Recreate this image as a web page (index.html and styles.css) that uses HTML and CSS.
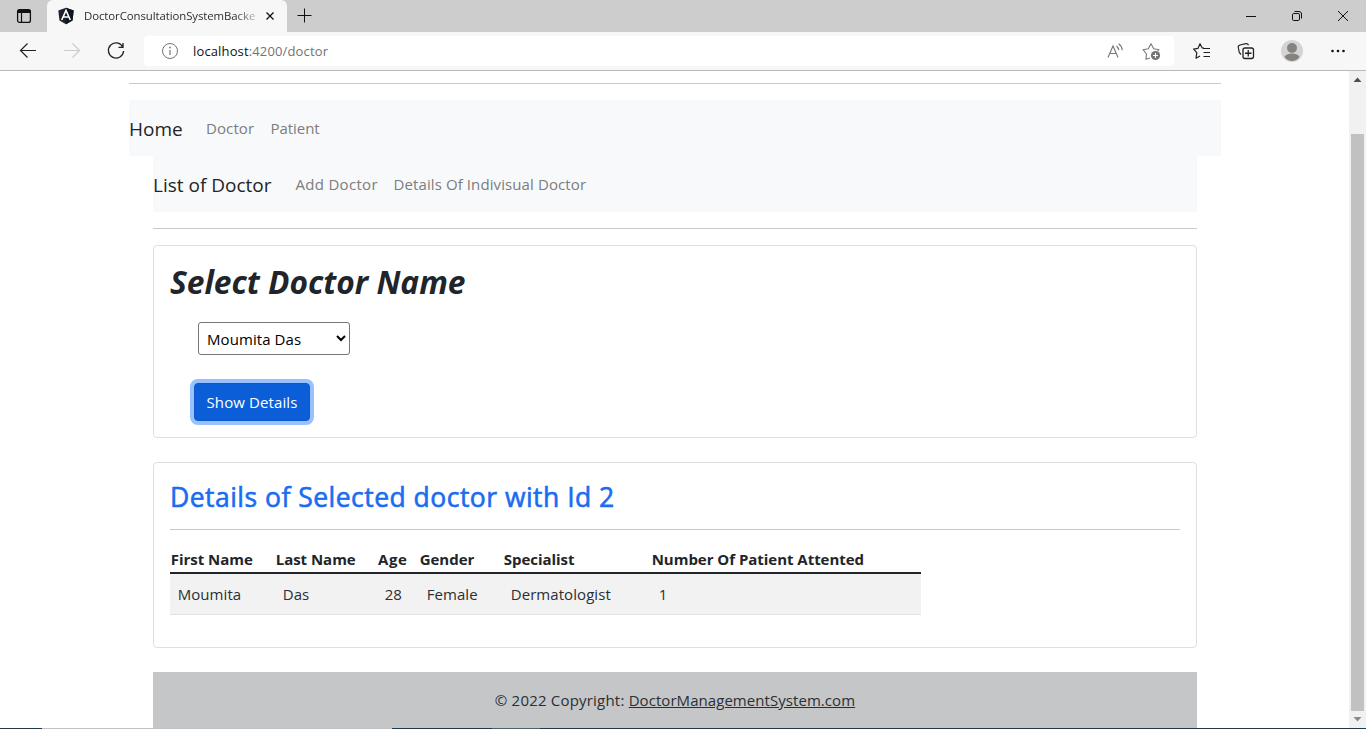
FILE: index.html
```html
<!DOCTYPE html>
<html lang="en">
<head>
<meta charset="utf-8">
<title>DoctorConsultationSystemBackend</title>
<link rel="stylesheet" href="styles.css">
</head>
<body>
<div class="window">
  <header class="tabbar">
    <div class="tab-actions">
      <svg width="16" height="16" viewBox="0 0 16 16"><rect x="1.6" y="1.6" width="12.8" height="12.8" rx="2" fill="none" stroke="#111" stroke-width="1.3"/><path d="M1.5 2.8Q1.5 1.5 3 1.5h10q1.500 0 1.500 1.300V5h-13z" fill="#111"/><path d="M5.500 5v9" stroke="#111" stroke-width="1.200"/></svg>
    </div>
    <div class="tab">
      <svg class="favicon" width="18" height="18" viewBox="0 0 18 18"><path d="M9 .8 16.700 3.500 15.500 13.500 9 17.200 2.500 13.500 1.300 3.500z" fill="#1b222b"/><path d="M9 .8 16.700 3.500 15.500 13.500 9 17.200z" fill="#0d1520"/><path d="M4.700 13 9 3.500 13.300 13M6.300 10h5.400" fill="none" stroke="#fff" stroke-width="1.600"/></svg>
      <span class="tab-title">DoctorConsultationSystemBacke</span>
      <svg class="tab-close" width="10" height="10" viewBox="0 0 10 10"><path d="M1.500 1.500l7 7M8.500 1.500 1.500 8.500" stroke="#111" stroke-width="1.300"/></svg>
    </div>
    <div class="new-tab"><svg width="16" height="16" viewBox="0 0 16 16"><path d="M7.500 .5v14M.5 7.500h14" stroke="#111"/></svg></div>
    <div class="window-controls">
      <svg width="12" height="12" viewBox="0 0 12 12"><path d="M1 6.500h10" stroke="#111"/></svg>
      <svg width="12" height="12" viewBox="0 0 12 12"><rect x="1.500" y="3.500" width="7" height="7" rx="1.300" fill="none" stroke="#111"/><path d="M3.500 1.500H8q2.500 0 2.500 2.500v4.500" fill="none" stroke="#111"/></svg>
      <svg width="12" height="12" viewBox="0 0 12 12"><path d="M1 1l10 10M11 1 1 11" stroke="#111"/></svg>
    </div>
  </header>
  <div class="toolbar">
    <div class="nav-buttons">
      <svg width="20" height="20" viewBox="0 0 20 20"><path d="M18 9.500H2.500M9.500 2.500 2.500 9.500l7 7" fill="none" stroke="#222" stroke-width="1.200"/></svg>
      <svg width="20" height="20" viewBox="0 0 20 20"><path d="M2 9.500h15.500M10.500 2.500l7 7-7 7" fill="none" stroke="#ccc" stroke-width="1.200"/></svg>
      <svg width="20" height="20" viewBox="0 0 20 20"><path d="M16.800 6A7.600 7.600 0 1 0 17.600 10M17 2v4.300h-4.500" fill="none" stroke="#222" stroke-width="1.300"/></svg>
    </div>
    <div class="address">
      <svg width="18" height="18" viewBox="0 0 18 18"><circle cx="9" cy="9" r="7.500" fill="none" stroke="#747474"/><path d="M9 8v5" stroke="#747474" stroke-width="1.200"/><circle cx="9" cy="5.500" r=".9" fill="#747474"/></svg>
      <span class="url"><span class="host">localhost</span>:4200/doctor</span>
      <svg class="read-aloud" width="18" height="18" viewBox="0 0 18 18"><path d="M2 15.500 7 4l5 11.500M3.800 11.500h6.400" fill="none" stroke="#777" stroke-width="1.100"/><path d="M10.500 4q2 1.700 2.200 4M12.700 1.800q3.300 2.400 3.500 6.400" fill="none" stroke="#777" stroke-width="1.100"/></svg>
      <svg width="20" height="20" viewBox="0 0 20 20"><path d="M9 17 4.900 18.300 5.500 13 2 8.700 7.300 7.700 10 2.700 12.700 7.700 18 8.700 16.500 10.300" fill="none" stroke="#777" stroke-width="1.100" stroke-linejoin="round"/><circle cx="14.500" cy="14.500" r="4.600" fill="#747474"/><path d="M14.500 12v5M12 14.500h5" stroke="#fff" stroke-width="1.100"/></svg>
    </div>
    <div class="tools">
      <svg width="20" height="20" viewBox="0 0 20 20"><path d="M12 7.200 10.200 7 8 2.700 5.900 7.400l-4.300.7 3.200 3.500L4 17.200l4-2.200" fill="none" stroke="#222" stroke-width="1.200" stroke-linejoin="round"/><path d="M11 7.500h7M11.500 11.500H18M11.500 15.500H18" stroke="#222" stroke-width="1.200"/></svg>
      <svg width="20" height="20" viewBox="0 0 20 20"><path d="M5 13.500 3.300 11.500 2.300 6.500Q2 4.500 4 4L10 2.600q1.700-.4 2.500 1.600" fill="none" stroke="#222" stroke-width="1.200"/><rect x="7" y="7" width="10.500" height="10.500" rx="2" fill="none" stroke="#222" stroke-width="1.300"/><path d="M12.250 9v6.500M9 12.250h6.500" stroke="#222" stroke-width="1.300"/></svg>
      <svg width="22" height="22" viewBox="0 0 22 22"><circle cx="11" cy="11" r="11" fill="#d6d4d2"/><circle cx="11" cy="8" r="5" fill="#85827f"/><path d="M3.500 17q1.700-3.500 7.500-3.500t7.500 3.500Q15.500 21 11 21t-7.500-4z" fill="#85827f"/></svg>
      <svg width="16" height="16" viewBox="0 0 16 16"><g fill="#111"><circle cx="2.500" cy="8" r="1.300"/><circle cx="8" cy="8" r="1.300"/><circle cx="13.500" cy="8" r="1.300"/></g></svg>
    </div>
  </div>
  <div class="viewport">
    <main class="page">
      <hr class="rule">
      <nav class="navbar">
        <a class="brand brand-home">Home</a><a class="link link-doctor">Doctor</a><a class="link link-patient">Patient</a>
      </nav>
      <div class="content">
        <nav class="navbar">
          <a class="brand brand-list">List of Doctor</a><a class="link link-add">Add Doctor</a><a class="link link-details">Details Of Indivisual Doctor</a>
        </nav>
        <hr class="rule">
        <section class="card select-card">
          <h2 class="select-title">Select Doctor Name</h2>
          <select class="doctor-select"><option>Moumita Das</option></select>
          <button class="show-button">Show Details</button>
        </section>
        <section class="card details-card">
          <h3 class="details-title">Details of Selected doctor with Id 2</h3>
          <hr class="rule details-rule">
          <table class="table">
            <colgroup><col class="c1"><col class="c2"><col class="c3"><col class="c4"><col class="c5"><col class="c6"></colgroup>
            <thead><tr><th>First Name</th><th>Last Name</th><th class="age">Age</th><th>Gender</th><th>Specialist</th><th>Number Of Patient Attented</th></tr></thead>
            <tbody><tr><td>Moumita</td><td>Das</td><td>28</td><td>Female</td><td>Dermatologist</td><td>1</td></tr></tbody>
          </table>
        </section>
        <footer class="footer"><span>© 2022 Copyright: <a class="footer-link">DoctorManagementSystem.com</a></span></footer>
      </div>
    </main>
    <div class="scrollbar">
      <svg width="17" height="17" viewBox="0 0 17 17"><path d="M4.500 11 8.500 6.500 12.500 11z" fill="#505050"/></svg>
      <div class="thumb"></div>
      <svg width="17" height="17" viewBox="0 0 17 17"><path d="M4.500 6 8.500 10.500 12.500 6z" fill="#8b8b8b"/></svg>
    </div>
  </div>
  <div class="taskbar-edge"></div>
</div>
</body>
</html>
```
FILE: styles.css
```css
* { box-sizing: border-box; }
body {
  margin: 0;
  overflow: hidden;
  background: #fff;
  color: #2b2f33;
  font-family: "Open Sans", "Noto Sans", sans-serif;
  font-size: 15px;
  line-height: 24px;
}
svg { display: block; flex: none; }
.window { display: flex; flex-direction: column; width: 1366px; height: 729px; }

.tabbar { display: flex; height: 32px; flex: none; background: #cdcdcd; }
.tab-actions { width: 47px; padding: 8px 0 0 16px; }
.tab {
  display: flex;
  align-items: center;
  width: 240px;
  padding-left: 10px;
  background: #f7f7f7;
  border-radius: 6px 6px 0 0;
}
.tab-title {
  width: 172px;
  margin-left: 9px;
  white-space: nowrap;
  font-size: 11.4px;
  letter-spacing: -0.08px;
  -webkit-mask-image: linear-gradient(90deg, #000 88%, rgba(0, 0, 0, 0.25));
  mask-image: linear-gradient(90deg, #000 88%, rgba(0, 0, 0, 0.25));
}
.tab-close { margin-left: 9px; }
.new-tab { padding: 8px 0 0 10px; }
.window-controls { display: flex; gap: 34px; margin-left: auto; padding: 10px 17px 0 0; }

.toolbar {
  display: flex;
  align-items: center;
  height: 39px;
  flex: none;
  background: #f7f7f7;
  border-bottom: 1px solid #b9b9b9;
}
.nav-buttons { display: flex; gap: 24px; width: 144px; padding-left: 18px; }
.address {
  display: flex;
  align-items: center;
  width: 1030px;
  height: 30px;
  padding: 0 13px 0 17px;
  background: #fff;
  border-radius: 4px;
}
.url { margin-left: 14px; font-size: 13px; letter-spacing: 0.14px; color: #737373; }
.host { color: #111; }
.read-aloud { margin: 0 17px 0 auto; }
.tools { display: flex; align-items: center; width: 192px; padding-left: 18px; }
.tools svg:nth-child(2) { margin-left: 24px; }
.tools svg:nth-child(3) { margin-left: 25px; }
.tools svg:nth-child(4) { margin-left: 27px; }

.viewport { display: flex; height: 657px; }
.page { flex: 1; padding: 12px 128px 0 129px; }
.rule { height: 1px; margin: 0; border: 0; background: #c8c9ca; }
.navbar { display: flex; align-items: center; height: 56px; background: #f8f9fa; white-space: nowrap; }
.page > .navbar { margin-top: 16px; }
.content { padding: 0 24px; }
.content > .rule { margin: 16px 0; }
.brand { padding-top: 2px; font-size: 19px; line-height: 30px; color: #212529; }
.link { color: #7b7d7f; letter-spacing: 0.1px; }
.brand-home { width: 77px; }
.link-doctor { width: 64.500px; }
.link-patient { letter-spacing: -0.05px; }
.brand-list { width: 142.500px; }
.link-add { width: 98px; letter-spacing: 0.3px; }

.card { border: 1px solid #dfdfdf; border-radius: 4px; }
.select-card { display: flex; flex-direction: column; align-items: flex-start; height: 193px; padding: 17px 16px 16px; }
.select-card > * { flex: none; }
.select-title { margin: 0; font-size: 31.700px; line-height: 38px; font-weight: 700; font-style: italic; white-space: nowrap; color: #212529; }
.doctor-select {
  width: 152px;
  height: 33px;
  margin: 21px 0 0 28px;
  padding: 1px 4px 0;
  border: 1px solid #767676;
  border-radius: 3px;
  background: #fff;
  color: #000;
  font: inherit;
  letter-spacing: 0.08px;
}
.show-button {
  width: 116px;
  height: 38px;
  margin: 28px 0 0 24px;
  padding: 0 0 1px;
  border: 1px solid #0a58ca;
  border-radius: 4px;
  background: #0b5ed7;
  box-shadow: 0 0 0 4px #98c1fe;
  color: #fff;
  font: inherit;
  letter-spacing: 0.1px;
  white-space: nowrap;
}

.details-card { height: 186px; margin-top: 24px; padding: 17px 16px; }
.details-title {
  margin: 0;
  font-size: 26.500px;
  line-height: 34px;
  letter-spacing: 0.48px;
  font-weight: 500;
  -webkit-text-stroke: 0.6px #1a6cf0;
  color: #1a6cf0;
  white-space: nowrap;
}
.details-rule { margin: 15px 0; }
.table { width: 751px; table-layout: fixed; border-collapse: collapse; text-align: left; white-space: nowrap; }
.table th { height: 28px; padding: 1px 0 1px 0.700px; border-bottom: 2px solid #212529; font-weight: 700; letter-spacing: -0.03px; color: #212529; }
.table .age { padding-left: 1px; letter-spacing: 0.6px; }
.table td { height: 41px; padding: 0 8px 0 7.700px; background: #f2f2f2; border-bottom: 1px solid #dee2e6; letter-spacing: 0.07px; }
.c1 { width: 105px; }
.c2 { width: 102px; }
.c3 { width: 42px; }
.c4 { width: 84px; }
.c5 { width: 148px; }
.c6 { width: 270px; }
.footer { display: flex; align-items: center; justify-content: center; height: 56px; margin-top: 24px; background: #c5c6c8; letter-spacing: 0.2px; white-space: nowrap; }
.footer-link { text-decoration: underline; letter-spacing: 0.06px; }

.scrollbar { display: flex; flex-direction: column; width: 17px; background: #f1f1f1; }
.thumb { width: 13px; height: 577px; margin: 46px 2px 0; background: #c1c1c1; }
.scrollbar svg:last-child { margin-top: auto; }
.taskbar-edge { height: 1px; background: linear-gradient(90deg, #22394a 42px, #bfc1c2 42px, #bfc1c2 392px, #22394a 392px, #22394a 492px, #4f626c 492px, #4f626c 540px, #22394a 540px); }
```
